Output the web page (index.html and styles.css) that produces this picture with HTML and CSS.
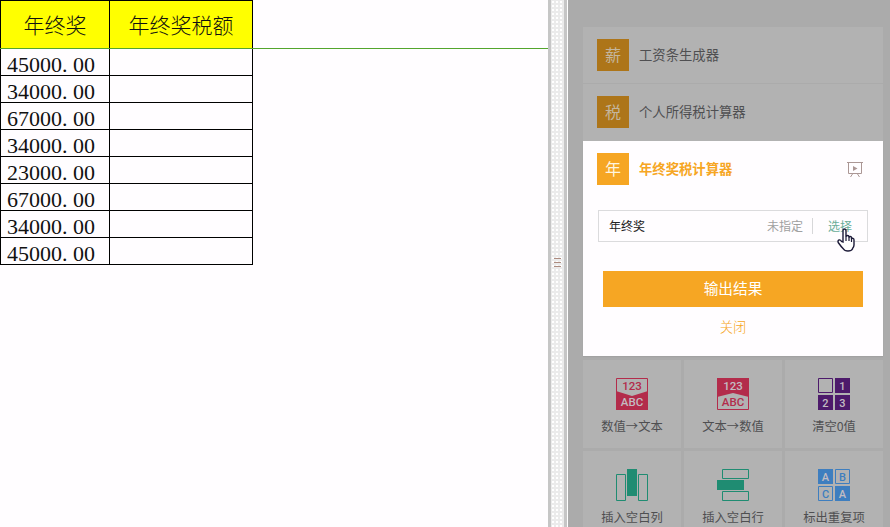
FILE: index.html
```
<!DOCTYPE html>
<html lang="zh-CN">
<head>
<meta charset="utf-8">
<title>年终奖税计算器</title>
<link rel="stylesheet" href="styles.css">
</head>
<body>
<div class="app">
  <main class="sheet">
    <div class="sheet-head"><div class="cell first">年终奖</div><div class="cell">年终奖税额</div></div>
    <div class="rows">
      <div class="row"><div class="cell first">45000<i>.</i>00</div><div class="cell"></div></div>
      <div class="row"><div class="cell first">34000<i>.</i>00</div><div class="cell"></div></div>
      <div class="row"><div class="cell first">67000<i>.</i>00</div><div class="cell"></div></div>
      <div class="row"><div class="cell first">34000<i>.</i>00</div><div class="cell"></div></div>
      <div class="row"><div class="cell first">23000<i>.</i>00</div><div class="cell"></div></div>
      <div class="row"><div class="cell first">67000<i>.</i>00</div><div class="cell"></div></div>
      <div class="row"><div class="cell first">34000<i>.</i>00</div><div class="cell"></div></div>
      <div class="row"><div class="cell first">45000<i>.</i>00</div><div class="cell"></div></div>
    </div>
  </main>
  <div class="splitter"><span class="grip"></span></div>
  <aside class="panel">
    <div class="tool"><span class="badge">薪</span><span>工资条生成器</span></div>
    <div class="tool second"><span class="badge">税</span><span>个人所得税计算器</span></div>
    <section class="active">
      <header class="active-head">
        <span class="badge">年</span><strong>年终奖税计算器</strong>
        <svg class="board" width="16" height="16" viewBox="0 0 16 16" fill="none" stroke="#ab9795"><path d="M0 1.5H16M1.5 2V12.5H14.5V2M5.5 13L3.5 16M10.5 13L12.5 16"/><path d="M6 5L10.5 7.5L6 10Z" fill="#ab9795" stroke="none"/></svg>
      </header>
      <div class="field">
        <span>年终奖</span><span class="value">未指定</span><span class="choose">选择</span>
        <svg class="cursor" width="18" height="24" viewBox="0 0 18 24"><path d="M6 14V3Q6 1 7.5 1T9 3V9Q9 7.5 10.5 7.5T12 9V10Q12 8.5 13.3 8.5T14.5 10V11Q15 10 16 10.3T17 12V17Q17 19 15.5 20.5V21Q14.5 23 11 23T6.5 21Q4 18.5 1.2 14.5Q.6 12.5 2 12T4.5 13.5Z" fill="#fff" stroke="#1c1a38" stroke-width="1.4"/><path d="M9 9V13M12 10V13M14.5 11V14" stroke="#1c1a38" stroke-width="1.2"/></svg>
      </div>
      <div class="submit">输出结果</div>
      <div class="close">关闭</div>
    </section>
    <div class="grid">
      <div class="tile">
        <svg width="32" height="32" viewBox="0 0 32 32" fill="#b32c4b"><path d="M.5 .5H31.5V31.5H.5Z" fill="none" stroke="#b32c4b"/><path d="M0 13L16 18L32 13V32H0Z"/><text x="16" y="12" class="n">123</text><text x="16" y="28" class="n light">ABC</text></svg>
        <span>数值→文本</span></div>
      <div class="tile">
        <svg width="32" height="32" viewBox="0 0 32 32" fill="#b32c4b"><path d="M.5 .5H31.5V31.5H.5Z" fill="none" stroke="#b32c4b"/><path d="M0 0H32V19L16 15L0 19Z"/><text x="16" y="12" class="n light">123</text><text x="16" y="28" class="n">ABC</text></svg>
        <span>文本→数值</span></div>
      <div class="tile">
        <svg width="32" height="32" viewBox="0 0 32 32" fill="#4d1a6b"><path d="M.5 .5H14.5V14.5H.5Z" fill="none" stroke="#4d1a6b"/><path d="M17 0H32V15H17ZM0 17H15V32H0ZM17 17H32V32H17Z"/><g class="light"><text x="24.5" y="12">1</text><text x="7.5" y="29">2</text><text x="24.5" y="29">3</text></g></svg>
        <span>清空0值</span></div>
      <div class="tile">
        <svg width="32" height="32" viewBox="0 0 32 32" fill="none" stroke="#1f8c72"><path d="M.5 5.5H9.5V31.5H.5ZM22.5 5.5H31.5V31.5H22.5Z"/><path d="M11 0H21V27H11Z" fill="#1f8c72" stroke="none"/></svg>
        <span>插入空白列</span></div>
      <div class="tile">
        <svg width="32" height="32" viewBox="0 0 32 32" fill="none" stroke="#1f8c72"><path d="M5.5 .5H31.5V9.5H5.5ZM5.5 22.5H31.5V31.5H5.5Z"/><path d="M0 11H27V21H0Z" fill="#1f8c72" stroke="none"/></svg>
        <span>插入空白行</span></div>
      <div class="tile">
        <svg width="32" height="32" viewBox="0 0 32 32" fill="#3e7ebf"><path d="M17.5 .5H31.5V14.5H17.5ZM.5 17.5H14.5V31.5H.5Z" fill="none" stroke="#3e7ebf"/><path d="M0 0H15V15H0ZM17 17H32V32H17Z"/><text x="7.5" y="12" class="light">A</text><text x="24.5" y="12">B</text><text x="7.5" y="29">C</text><text x="24.5" y="29" class="light">A</text></svg>
        <span>标出重复项</span></div>
    </div>
  </aside>
</div>
</body>
</html>
```
FILE: styles.css
```
* { box-sizing: border-box; }
body { margin: 0; overflow: hidden; font-family: "Noto Sans CJK SC", sans-serif; font-weight: 400; }
.app { display: grid; grid-template-columns: 548px 20px 322px; width: 890px; height: 527px; }
.sheet { background: #fffdff; color: #111; }
.sheet-head { display: flex; height: 49px; border-bottom: 1px solid #53a52d; font-size: 21px; font-weight: 300; line-height: 46px; text-align: center; }
.cell { width: 143px; height: 100%; border-right: 1px solid #000; }
.cell.first { width: 110px; border-left: 1px solid #000; }
.sheet-head .cell { background: #ff0; border-top: 1px solid #000; }
.row { display: flex; width: 253px; height: 27px; border-bottom: 1px solid #000; font: 22px/32px "Liberation Serif", serif; }
.row .first { padding-left: 6px; white-space: nowrap; }
.row i { display: inline-block; width: 11px; font-style: normal; }
.splitter { display: flex; align-items: center; justify-content: center; border-left: 3px solid #c6c6c6; background: radial-gradient(circle, #fff 1px, #ebebeb 1.5px) 0 0 / 4px 4px; box-shadow: inset -1px 0 #fff, inset -4px 0 #c6c6c6; }
.grip { width: 7px; height: 9px; margin: 0 4px 2px 0; background: repeating-linear-gradient(#ad8c80 0 1px, transparent 1px 4px); }
.panel { padding: 27px 7px 0 15px; overflow: hidden; background: #ababab; color: #4f4f51; }
.tool { display: flex; align-items: center; gap: 10px; height: 56px; padding-left: 14px; background: #b2b2b2; font-size: 13.33px; }
.tool span:last-child, .active-head strong { margin-top: -2px; }
.second { height: 57px; margin-top: 1px; padding-bottom: 1px; }
.badge { width: 32px; height: 32px; background: #ad7519; color: #c4b69e; font-size: 16px; line-height: 31px; text-align: center; }
.active { height: 215px; background: #fffdff; padding-top: 12px; font-size: 13.33px; box-shadow: 0 1px 1px #a2a2a2; }
.active-head { display: flex; align-items: center; gap: 10px; height: 32px; padding: 0 20px 0 14px; color: #f6a623; }
.active-head strong { font-weight: 700; }
.active .badge { background: #f6a623; color: #fff5df; }
.board { margin-left: auto; }
.field { position: relative; display: flex; align-items: center; width: 270px; height: 32px; margin: 25px 0 0 15px; padding: 0 15px 1px 10px; border: 1px solid #dbdbdd; font-size: 12px; color: #222; }
.value { margin-left: auto; color: #a0a0a0; }
.choose { margin-left: 9px; padding-left: 15px; border-left: 1px solid #d7d7d9; line-height: 16px; color: #69ad98; }
.cursor { position: absolute; right: 12px; top: 17px; }
.submit { height: 36px; margin: 29px 20px 0; background: #f6a623; color: #fff; font-size: 14.67px; line-height: 34px; text-align: center; }
.close { margin-top: 10px; line-height: 20px; text-align: center; font-weight: 300; color: #f6a623; }
.grid { display: grid; grid-template-columns: repeat(3, 98px); gap: 3px; margin-top: 4px; }
.tile { display: flex; flex-direction: column; align-items: center; height: 88px; padding-top: 18px; background: #b2b2b2; font-size: 12.3px; line-height: 18px; }
.tile span { margin-top: 7px; white-space: nowrap; }
.tile text { font: 500 11px Roboto, sans-serif; text-anchor: middle; stroke: none; }
.tile .n { font-size: 11.5px; }
.light { fill: #c3bcc2; }
```
